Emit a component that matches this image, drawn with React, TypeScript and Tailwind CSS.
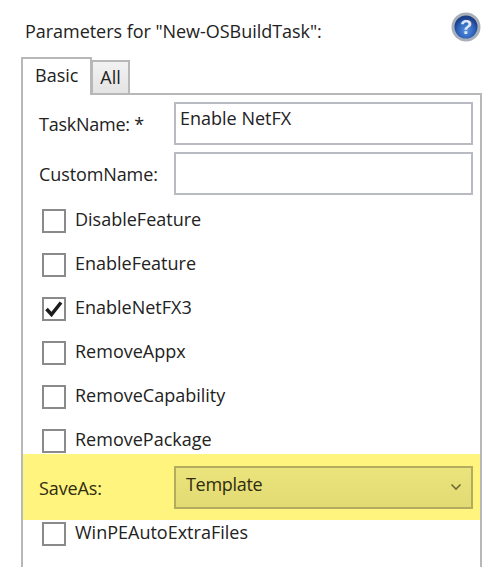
import React from "react";

const font = { fontFamily: '"Open Sans", "Noto Sans", sans-serif' };

function Check({ label, checked, short }: { label: string; checked?: boolean; short?: boolean }) {
  return (
    <div className={short ? "flex items-center h-[28px] pl-[19px] gap-[9px] shrink-0" : "flex items-center h-[44px] pl-[19px] gap-[9px] shrink-0"}>
      <div className="w-[24px] h-[24px] border-2 border-[#8a8a8a] bg-white flex items-center justify-center shrink-0">
        {checked && (
          <svg width="18" height="16" viewBox="0 0 18 16">
            <path d="M1.5 8 L6.5 13.5 L16 1.5" fill="none" stroke="#1c1c1c" strokeWidth="3.5" />
          </svg>
        )}
      </div>
      <span className="text-[18px] leading-[24px] text-[#222] mt-[-5px]">{label}</span>
    </div>
  );
}

function HelpIcon() {
  return (
    <svg className="mb-[3px]" width="30" height="30" viewBox="0 0 30 30">
      <defs>
        <radialGradient id="g" cx="50%" cy="65%" r="55%">
          <stop offset="0%" stopColor="#5a92e0" />
          <stop offset="70%" stopColor="#2a5fb8" />
          <stop offset="100%" stopColor="#1c3f86" />
        </radialGradient>
      </defs>
      <circle cx="15" cy="15" r="14.5" fill="#a9afb8" />
      <circle cx="15" cy="15" r="11.5" fill="url(#g)" />
      <text x="15" y="22" textAnchor="middle" fontSize="20" fontWeight="700" fill="#dfe8f6" fontFamily="Liberation Sans, sans-serif">?</text>
    </svg>
  );
}

export default function App() {
  return (
    <div style={font} className="w-[496px] h-[567px] bg-white overflow-hidden flex flex-col">
      <div className="flex items-center justify-between h-[57px] pl-[25px] pr-[15px] shrink-0">
        <span className="text-[18px] text-[#222] tracking-[-0.04px] mt-[6px]">Parameters for "New-OSBuildTask":</span>
        <HelpIcon />
      </div>
      <div className="flex items-end pl-[21px] relative z-10 mb-[-2px] shrink-0">
        <div className="w-[71px] h-[38px] bg-white border-2 border-b-0 border-[#b8b8b8] pl-[12px] text-[18px] leading-[32px] text-[#222]">Basic</div>
        <div className="w-[39px] h-[35px] ml-[-1px] bg-gradient-to-b from-[#f2f2f2] to-[#e4e4e4] border-2 border-[#b8b8b8] flex justify-center text-[18px] leading-[30px] text-[#222]">All</div>
      </div>
      <div className="ml-[21px] w-[461px] h-[474px] border-2 border-b-0 border-[#b8b8b8] flex flex-col shrink-0">
        <div className="flex items-center h-[43px] mt-[7px] pl-[16px] pr-[7px] shrink-0">
          <span className="w-[135px] text-[18px] text-[#222] mt-[2px] tracking-[-0.25px]">TaskName: *</span>
          <div className="flex-1 h-[43px] border-2 border-[#b8bbc2] px-[4px] text-[18px] leading-[28px] text-[#222]">Enable NetFX</div>
        </div>
        <div className="flex items-center h-[43px] mt-[7px] pl-[16px] pr-[7px] shrink-0">
          <span className="w-[135px] text-[18px] text-[#222] mt-[2px] tracking-[-0.1px]">CustomName:</span>
          <div className="flex-1 h-[43px] border-2 border-[#b8bbc2]" />
        </div>
        <div className="h-[4px] shrink-0" />
        <Check label="DisableFeature" />
        <Check label="EnableFeature" />
        <Check label="EnableNetFX3" checked />
        <Check label="RemoveAppx" />
        <Check label="RemoveCapability" />
        <Check label="RemovePackage" />
        <div className="flex items-center h-[66px] mt-[-9px] bg-[#fff47e] pl-[16px] pr-[7px] shrink-0">
          <span className="w-[135px] text-[18px] text-[#2f2c10] mt-[2px] tracking-[-0.1px]">SaveAs:</span>
          <div className="flex-1 h-[43px] border-2 border-[#b3ab5e] bg-gradient-to-b from-[#ebe47c] to-[#e2da72] flex items-start justify-between pl-[10px] pr-[9px]">
            <span className="text-[18px] leading-[32px] text-[#2f2c10] tracking-[-0.3px]">Template</span>
            <svg className="mt-[15px]" width="12" height="8" viewBox="0 0 12 8">
              <path d="M1.5 1.5 L6 6 L10.5 1.5" fill="none" stroke="#6f6a35" strokeWidth="1.6" />
            </svg>
          </div>
        </div>
        <Check label="WinPEAutoExtraFiles" short />
      </div>
    </div>
  );
}
